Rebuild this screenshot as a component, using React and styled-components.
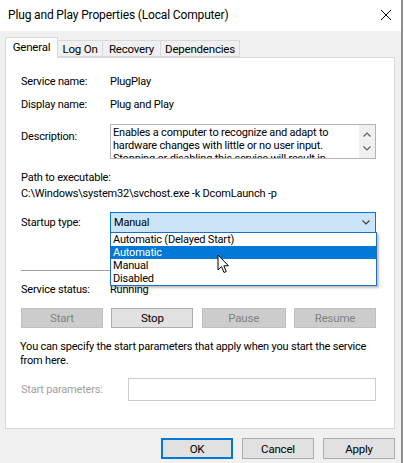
import React from "react";
import styled, { createGlobalStyle } from "styled-components";

const Global = createGlobalStyle`
  html, body { margin: 0; padding: 0; background: #ffffff; }
  body {
    font-family: Roboto, "Liberation Sans", sans-serif;
    font-size: 11px;
    letter-spacing: -0.2px;
    color: #000;
  }
`;

const Window = styled.div`
  width: 401px;
  height: 463px;
  border-right: 2px solid #8e8e8e;
  background: #f0f0f0;
  display: flex;
  flex-direction: column;
  overflow: hidden;
`;

const TitleBar = styled.div`
  height: 31px;
  background: #ffffff;
  display: flex;
  align-items: center;
  justify-content: space-between;
  padding: 0 8px 2px 8px;
  box-sizing: border-box;
  font-size: 12px;
  letter-spacing: -0.15px;
`;

const CloseBtn = styled.div`
  width: 12px;
  height: 12px;
  margin-right: 1px;
  display: flex;
`;

const Body = styled.div`
  flex: 1;
  padding: 6px 6px 0 5px;
  display: flex;
  flex-direction: column;
`;

const Tabs = styled.div`
  display: flex;
  align-items: flex-end;
  height: 20px;
  position: relative;
  z-index: 2;
`;

const Tab = styled.div`
  width: ${(p) => p.$w}px;
  height: ${(p) => (p.$active ? "21px" : "17px")};
  margin-bottom: ${(p) => (p.$active ? "-1px" : "0")};
  background: ${(p) => (p.$active ? "#ffffff" : "#f0f0f0")};
  border: 1px solid #d9d9d9;
  border-bottom: ${(p) => (p.$active ? "none" : "1px solid #d9d9d9")};
  margin-left: ${(p) => (p.$first ? "0" : "-1px")};
  box-sizing: border-box;
  display: flex;
  align-items: center;
  justify-content: center;
  line-height: 14px;
  font-size: 11.5px;
  padding-bottom: ${(p) => (p.$active ? "3px" : "0")};
`;

const Panel = styled.div`
  width: 390px;
  height: 372px;
  background: #ffffff;
  border: 1px solid #d9d9d9;
  box-sizing: border-box;
  padding: 16px 18px 0 15px;
  position: relative;
`;

const Row = styled.div`
  display: grid;
  grid-template-columns: 89px 1fr;
  align-items: ${(p) => p.$align || "center"};
  min-height: 16px;
  margin-top: ${(p) => p.$mt || 0}px;
  line-height: 16px;
`;

const Label = styled.span`
  color: ${(p) => (p.$disabled ? "#a0a0a0" : "#000")};
  padding-top: ${(p) => p.$pt || 0}px;
`;

const Line = styled.div`
  line-height: 16px;
  margin-top: ${(p) => p.$mt || 0}px;
`;

const DescBox = styled.div`
  height: 35px;
  border: 1px solid #b4b4b4;
  box-sizing: border-box;
  display: flex;
  overflow: hidden;
`;

const DescText = styled.div`
  flex: 1;
  padding: 1px 2px 0 2px;
  line-height: 13px;
  overflow: hidden;
`;

const ScrollBar = styled.div`
  width: 16px;
  background: #f0f0f0;
  display: flex;
  flex-direction: column;
  align-items: center;
  justify-content: space-around;
  padding: 2px 0;
`;

const Select = styled.div`
  height: 21px;
  border: 1px solid #0078d7;
  background: #cce4f7;
  box-sizing: border-box;
  display: flex;
  align-items: center;
  justify-content: space-between;
  padding: 0 5px 0 3px;
`;

const DropList = styled.div`
  position: absolute;
  left: 104px;
  top: 174px;
  width: 267px;
  background: #ffffff;
  border: 1px solid #1a6fc4;
  box-sizing: border-box;
  box-shadow: 2px 2px 2px rgba(0, 0, 0, 0.25);
  z-index: 3;
`;

const Option = styled.div`
  height: 13px;
  line-height: 13px;
  padding-left: 2px;
  background: ${(p) => (p.$hl ? "#0078d7" : "transparent")};
  color: ${(p) => (p.$hl ? "#ffffff" : "#000")};
`;

const Cursor = styled.svg`
  position: absolute;
  left: 211px;
  top: 196px;
  z-index: 4;
`;

const Separator = styled.div`
  height: 1px;
  background: #a0a0a0;
  margin-top: 37px;
  margin-right: 1px;
`;

const ButtonRow = styled.div`
  display: grid;
  grid-template-columns: 82px 82px 84px 82px;
  column-gap: 8px;
  justify-content: space-between;
  margin-top: 10px;
`;

const Button = styled.div`
  height: 20px;
  box-sizing: border-box;
  border: ${(p) => (p.$default ? "2px solid #0078d7" : `1px solid ${p.$disabled ? "#bfbfbf" : "#adadad"}`)};
  background: ${(p) => (p.$disabled ? "#cccccc" : "#e1e1e1")};
  color: ${(p) => (p.$disabled ? "#838383" : "#000")};
  display: flex;
  align-items: center;
  justify-content: center;
  font-size: 11.5px;
`;

const Para = styled.div`
  margin-top: 12px;
  line-height: 14px;
  margin-left: -1px;
`;

const ParamRow = styled.div`
  display: grid;
  grid-template-columns: 107px 1fr;
  align-items: center;
  margin-top: 10px;
`;

const Input = styled.div`
  height: 23px;
  border: 1px solid #cccccc;
  box-sizing: border-box;
  background: #fff;
`;

const Footer = styled.div`
  display: grid;
  grid-template-columns: repeat(3, 72px);
  column-gap: 9px;
  justify-content: end;
  margin-top: 9px;
`;

const FooterButton = styled(Button)`
  height: 21px;
`;

const Chevron = ({ dir = "down", size = 8, color = "#606060" }) => (
  <svg width={size} height={size / 2 + 1} viewBox="0 0 8 5">
    <path
      d={dir === "down" ? "M0.5 0.5 L4 4 L7.5 0.5" : "M0.5 4.5 L4 1 L7.5 4.5"}
      fill="none"
      stroke={color}
      strokeWidth="1.2"
    />
  </svg>
);

export default function App() {
  return (
    <>
      <Global />
      <Window>
        <TitleBar>
          <span>Plug and Play Properties (Local Computer)</span>
          <CloseBtn>
            <svg width="12" height="12" viewBox="0 0 12 12">
              <path d="M1 1 L11 11 M11 1 L1 11" stroke="#000" strokeWidth="1" />
            </svg>
          </CloseBtn>
        </TitleBar>
        <Body>
          <Tabs>
            <Tab $active $first $w={53}>General</Tab>
            <Tab $w={46}>Log On</Tab>
            <Tab $w={59}>Recovery</Tab>
            <Tab $w={80}>Dependencies</Tab>
          </Tabs>
          <Panel>
            <Row>
              <Label>Service name:</Label>
              <span>PlugPlay</span>
            </Row>
            <Row $mt={7}>
              <Label>Display name:</Label>
              <span>Plug and Play</span>
            </Row>
            <Row $mt={11} $align="start">
              <Label $pt={5}>Description:</Label>
              <DescBox>
                <DescText>
                  Enables a computer to recognize and adapt to hardware changes with little or no user input.
                  Stopping or disabling this service will result in system instability.
                </DescText>
                <ScrollBar>
                  <Chevron dir="up" />
                  <Chevron dir="down" />
                </ScrollBar>
              </DescBox>
            </Row>
            <Line $mt={11}>Path to executable:</Line>
            <Line>C:\Windows\system32\svchost.exe -k DcomLaunch -p</Line>
            <Row $mt={10}>
              <Label>Startup type:</Label>
              <Select>
                <span>Manual</span>
                <Chevron color="#404040" />
              </Select>
            </Row>
            <DropList>
              <Option>Automatic (Delayed Start)</Option>
              <Option $hl>Automatic</Option>
              <Option>Manual</Option>
              <Option>Disabled</Option>
            </DropList>
            <Cursor width="14" height="21" viewBox="0 0 14 21">
              <path
                d="M1 1 L1 16 L4.5 12.5 L7 18.5 L9.3 17.5 L6.8 11.8 L11.5 11.8 Z"
                fill="#ffffff"
                stroke="#000"
                strokeWidth="1"
                strokeLinejoin="miter"
              />
            </Cursor>
            <Separator />
            <Row $mt={11}>
              <Label>Service status:</Label>
              <span>Running</span>
            </Row>
            <ButtonRow>
              <Button $disabled>Start</Button>
              <Button>Stop</Button>
              <Button $disabled>Pause</Button>
              <Button $disabled>Resume</Button>
            </ButtonRow>
            <Para>
              You can specify the start parameters that apply when you start the service from here.
            </Para>
            <ParamRow>
              <Label $disabled>Start parameters:</Label>
              <Input />
            </ParamRow>
          </Panel>
          <Footer>
            <FooterButton $default>OK</FooterButton>
            <FooterButton>Cancel</FooterButton>
            <FooterButton>Apply</FooterButton>
          </Footer>
        </Body>
      </Window>
    </>
  );
}
